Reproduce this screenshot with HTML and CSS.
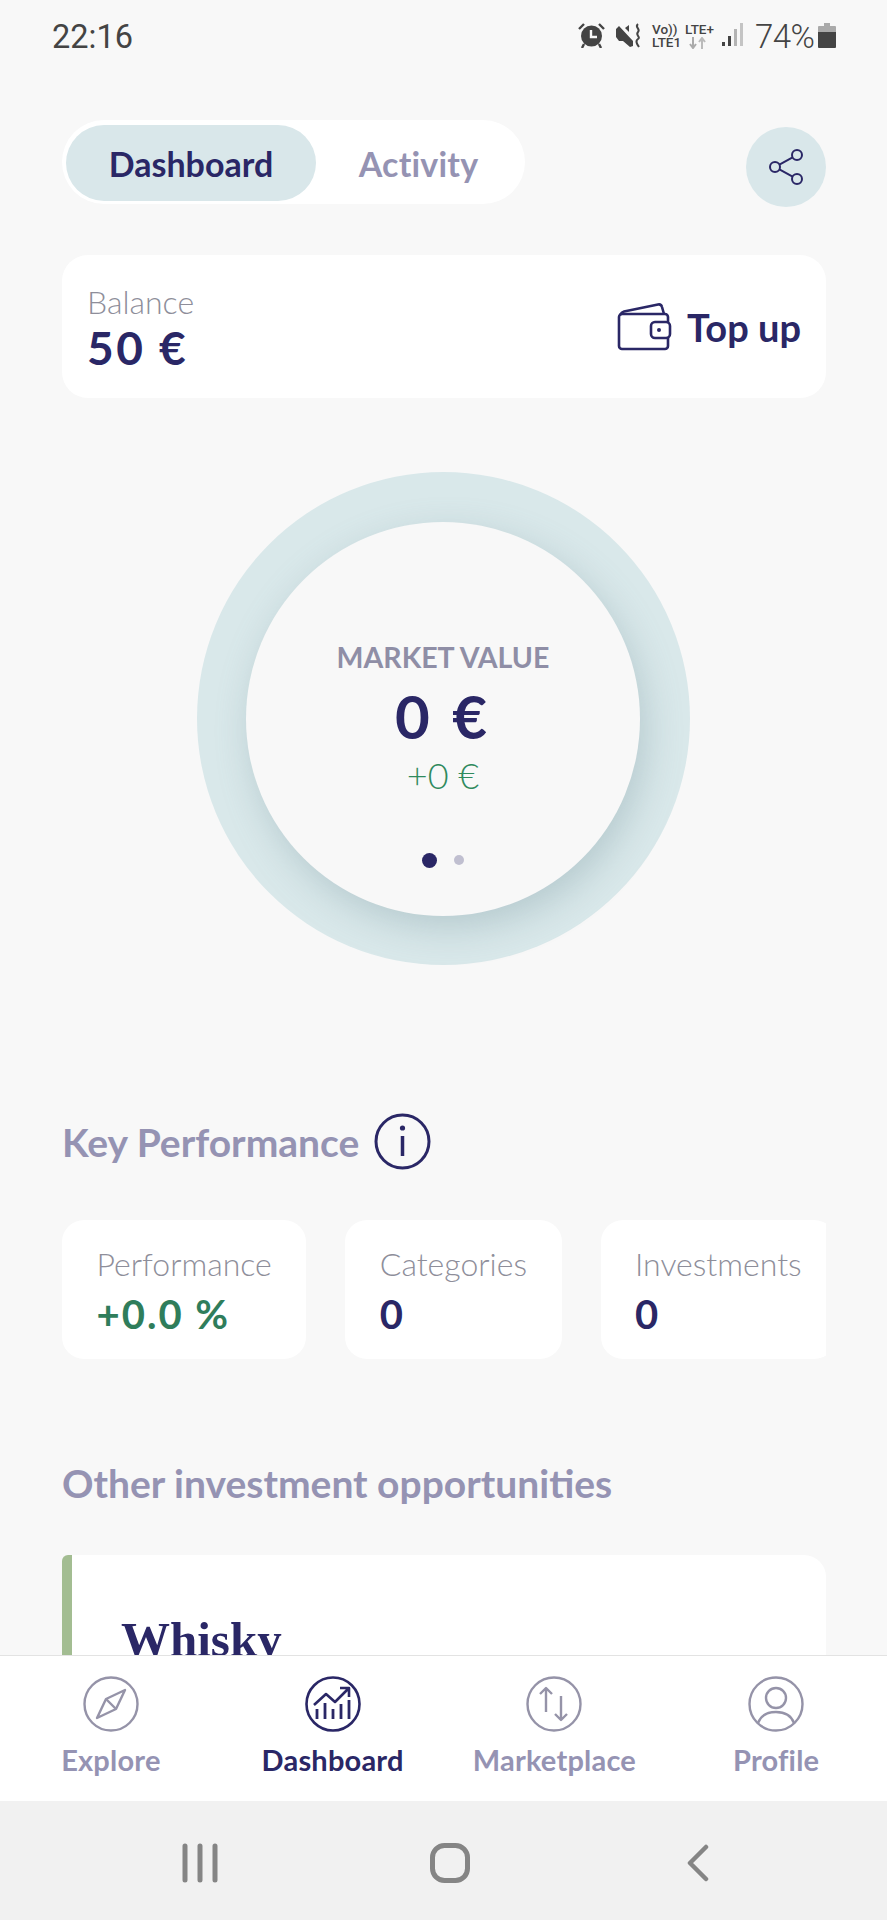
FILE: index.html
```html
<!DOCTYPE html>
<html lang="en">
<head>
    <meta charset="UTF-8">
    <meta name="viewport" content="width=device-width, initial-scale=1.0">
    <title>Dashboard</title>
    <link rel="stylesheet" href="styles.css">
</head>
<body>
    <div class="phone">
        <div class="status-bar">
            <span class="clock">22:16</span>
            <div class="status-icons">
                <svg class="st-alarm" viewBox="0 0 27 25"><path d="M1 6 6 1M26 6 21 1" fill="none" stroke="#444" stroke-width="2.4"/><circle cx="13.5" cy="13" r="10.5" fill="#444"/><path d="M13 7v7h6" fill="none" stroke="#f8f8f8" stroke-width="2.4"/><path d="M6 21 4 25M21 21l2 4" stroke="#444" stroke-width="2.4"/></svg>
                <svg class="st-mute" viewBox="0 0 26 25"><path d="M0 6 3 3l14 15v5l-3 1-7-6H3L0 14z" fill="#444"/><path d="M9 5l4-3v7z" fill="#444"/><path d="M22 1c-4 3 3 5 0 8s3 5 0 7-1 5 1 8" fill="none" stroke="#444" stroke-width="2"/></svg>
                <div class="st-net">
                    <span>Vo))</span><span>LTE+</span>
                    <span>LTE1</span>
                    <svg class="st-arrows" viewBox="0 0 17 12"><path d="M4 0v10M1 7l3 4 3-4" fill="none" stroke="#aaa" stroke-width="2"/><path d="M13 12V2M10 5l3-4 3 4" fill="none" stroke="#bbb" stroke-width="2"/></svg>
                </div>
                <svg class="st-signal" viewBox="0 0 21 24"><rect x="0" y="19" width="3" height="4" fill="#444"/><rect x="6" y="13" width="3" height="10" fill="#444"/><rect x="12" y="6" width="3" height="17" fill="#b4b4b4"/><rect x="18" y="0" width="3" height="23" fill="#c4c4c4"/></svg>
                <span class="st-pct">74%</span>
                <svg class="st-batt" viewBox="0 0 18 25"><path d="M6 0h6v3h5a1 1 0 0 1 1 1v5H0V4a1 1 0 0 1 1-1h5z" fill="#aaa"/><path d="M0 9h18v15a1 1 0 0 1-1 1H1a1 1 0 0 1-1-1z" fill="#444"/></svg>
            </div>
        </div>

        <div class="main">
            <div class="toolbar">
                <div class="tabs">
                    <div class="tab active">Dashboard</div>
                    <div class="tab">Activity</div>
                </div>
                <div class="share-btn">
                    <svg viewBox="0 0 38 38" width="38" height="38" fill="none" stroke="#2a2766" stroke-width="2"><circle cx="30" cy="7" r="5"/><circle cx="8" cy="19" r="5"/><circle cx="30" cy="31" r="5"/><path d="M25.600 9.400 12.400 16.600M12.400 21.400l13.200 7.200"/></svg>
                </div>
            </div>

            <div class="balance-card">
                <div>
                    <div class="balance-label">Balance</div>
                    <div class="balance-value">50 €</div>
                </div>
                <div class="top-up">
                    <svg viewBox="0 0 55 48" width="55" height="48" fill="none" stroke="#2a2766" stroke-width="2.6" stroke-linejoin="round"><path d="M5 46h43a3 3 0 0 0 3-3V35M51 19v-5a3 3 0 0 0-3-3H5a3 3 0 0 0-3 3v29a3 3 0 0 0 3 3"/><path d="M3 12c1-2 2-3 4-3.500L41 1.500c2-.4 3.500.5 4 2.500l2 7"/><rect x="34" y="19" width="19" height="16" rx="4"/><circle cx="42" cy="27" r="2" fill="#2a2766" stroke="none"/></svg>
                    <span>Top up</span>
                </div>
            </div>

            <div class="ring-wrap">
                <div class="ring">
                    <div class="ring-inner">
                        <div class="mv-label">MARKET VALUE</div>
                        <div class="mv-value">0 €</div>
                        <div class="mv-change">+0 €</div>
                        <div class="dots">
                            <span class="dot on"></span>
                            <span class="dot"></span>
                        </div>
                    </div>
                </div>
            </div>

            <div class="kpi-head">
                <h2 class="section-title">Key Performance</h2>
                <svg viewBox="0 0 57 57" width="57" height="57" fill="none" stroke="#2a2766"><circle cx="28.500" cy="28.500" r="26.500" stroke-width="3"/><path d="M28.500 23v20" stroke-width="3.500"/><circle cx="28.500" cy="15" r="2.600" fill="#2a2766" stroke="none"/></svg>
            </div>

            <div class="kpi-row">
                <div class="kpi">
                    <div class="kpi-label">Performance</div>
                    <div class="kpi-value green">+0.0 %</div>
                </div>
                <div class="kpi">
                    <div class="kpi-label">Categories</div>
                    <div class="kpi-value">0</div>
                </div>
                <div class="kpi">
                    <div class="kpi-label">Investments</div>
                    <div class="kpi-value">0</div>
                </div>
            </div>

            <h2 class="section-title other-title">Other investment opportunities</h2>

            <div class="invest-card">
                <div class="invest-name">Whisky</div>
            </div>
        </div>

        <div class="nav">
            <div class="nav-item">
                <svg viewBox="0 0 56 56" width="56" height="56" fill="none" stroke="#9593a8" stroke-width="2.400"><circle cx="28" cy="28" r="26.500"/><path d="M42 14 33 33 14 42 23 23z" stroke-linejoin="round"/><path d="M23 23 33 33" /></svg>
                <span>Explore</span>
            </div>
            <div class="nav-item active">
                <svg viewBox="0 0 56 56" width="56" height="56" fill="none" stroke="#2a2766" stroke-width="2.600"><circle cx="28" cy="28" r="26.500"/><path d="M9 29 21 18l9 8L43 13M35 12h9v9" stroke-linejoin="round"/><path d="M12 33v10M20 27v16M28 33v10M36 28v15M44 24v19" stroke-width="2.800"/></svg>
                <span>Dashboard</span>
            </div>
            <div class="nav-item">
                <svg viewBox="0 0 56 56" width="56" height="56" fill="none" stroke="#9593a8" stroke-width="2.400"><circle cx="28" cy="28" r="26.500"/><path d="M20 36V12M14 18l6-6 6 6M35 20v24M29 38l6 6 6-6" stroke-linejoin="round"/></svg>
                <span>Marketplace</span>
            </div>
            <div class="nav-item">
                <svg viewBox="0 0 56 56" width="56" height="56" fill="none" stroke="#9593a8" stroke-width="2.400"><circle cx="28" cy="28" r="26.500"/><circle cx="28" cy="22" r="10"/><path d="M10 47c3-8 10-11 18-11s15 3 18 11"/></svg>
                <span>Profile</span>
            </div>
        </div>

        <div class="sys-nav">
            <div class="sys-item">
                <svg viewBox="0 0 36 40" width="36" height="40" stroke="#858585" stroke-width="5" stroke-linecap="round"><path d="M3 3v34M18 3v34M33 3v34"/></svg>
            </div>
            <div class="sys-item">
                <svg viewBox="0 0 40 40" width="40" height="40" fill="none" stroke="#858585" stroke-width="5"><rect x="2.500" y="2.500" width="35" height="35" rx="12"/></svg>
            </div>
            <div class="sys-item back">
                <svg viewBox="0 0 22 38" width="22" height="38" fill="none" stroke="#858585" stroke-width="4.500" stroke-linecap="round" stroke-linejoin="round"><path d="M19 3 3 19l16 16"/></svg>
            </div>
        </div>
    </div>
</body>
</html>
```

FILE: styles.css
```css
* {
    box-sizing: border-box;
}
body {
    margin: 0;
    font-family: Lato, "Open Sans", sans-serif;
    background: #f8f8f8;
    color: #2a2766;
}
.phone {
    width: 887px;
    height: 1920px;
    display: flex;
    flex-direction: column;
    overflow: hidden;
}

/* status bar */
.status-bar {
    height: 74px;
    flex: none;
    display: flex;
    justify-content: space-between;
    padding: 18px 51px 0 52px;
    color: #444;
    font-family: Roboto, sans-serif;
}
.clock {
    font-size: 32.500px;
    line-height: 38px;
}
.status-icons {
    display: flex;
    align-items: flex-start;
    height: 38px;
    padding-top: 5px;
}
.st-alarm {
    width: 27px;
    height: 25px;
    margin-right: 11px;
}
.st-mute {
    width: 26px;
    height: 25px;
    margin-right: 10px;
}
.st-net {
    display: grid;
    grid-template-columns: 33px 30px;
    font-size: 13.500px;
    line-height: 13px;
    font-weight: 500;
    width: 70px;
}
.st-arrows {
    width: 17px;
    height: 12px;
    margin: 1px 0 0 4px;
}
.st-signal {
    width: 21px;
    height: 24px;
    margin-right: 12px;
}
.st-pct {
    font-size: 33px;
    line-height: 27px;
    font-weight: 300;
    width: 63px;
    letter-spacing: -0.5px;
}
.st-batt {
    width: 18px;
    height: 25px;
}

/* main scroll area */
.main {
    flex: 1;
    min-height: 0;
    overflow: hidden;
    padding: 46px 61px 0 62px;
}
.toolbar {
    display: flex;
    justify-content: space-between;
    align-items: flex-start;
    height: 84px;
}
.tabs {
    width: 463px;
    height: 84px;
    background: white;
    border-radius: 42px;
    padding: 5px 4px;
    display: flex;
}
.tab {
    width: 250px;
    height: 76px;
    border-radius: 38px;
    text-align: center;
    line-height: 78px;
    font-size: 34px;
    font-weight: 700;
    color: #9593b3;
}
.tab.active {
    background: #d9e7ea;
    color: #2a2766;
}
.tab + .tab {
    width: 205px;
    letter-spacing: 0.2px;
}
.share-btn {
    width: 80px;
    height: 80px;
    margin-top: 7px;
    border-radius: 50%;
    background: #d9e7ea;
    display: flex;
    align-items: center;
    justify-content: center;
}
.balance-card {
    margin-top: 51px;
    height: 143px;
    background: white;
    border-radius: 26px;
    padding: 0 25px;
    display: flex;
    justify-content: space-between;
    align-items: center;
}
.balance-label {
    font-size: 32px;
    line-height: 36px;
    font-weight: 300;
    color: #8e8e9a;
}
.balance-value {
    font-size: 46px;
    line-height: 52px;
    font-weight: 700;
    letter-spacing: 2.500px;
    margin-bottom: -4px;
    padding-top: 2px;
}
.top-up {
    display: flex;
    align-items: center;
    gap: 15px;
    font-size: 38px;
    font-weight: 700;
}

/* donut */
.ring-wrap {
    margin-top: 74px;
    padding-right: 2px;
    display: flex;
    justify-content: center;
}
.ring {
    width: 493px;
    height: 493px;
    border-radius: 50%;
    background: #d9e8ea;
    display: flex;
    align-items: center;
    justify-content: center;
}
.ring-inner {
    width: 394px;
    height: 394px;
    border-radius: 50%;
    background: #f8f8f8;
    box-shadow: 6px 12px 36px rgba(110, 140, 148, 0.32);
    display: flex;
    flex-direction: column;
    align-items: center;
    padding-top: 117px;
}
.mv-label {
    font-size: 28.500px;
    line-height: 36px;
    font-weight: 700;
    color: #8f8ea6;
}
.mv-value {
    font-size: 60px;
    line-height: 60px;
    font-weight: 700;
    letter-spacing: 4px;
    margin-top: 11px;
}
.mv-change {
    font-size: 36px;
    line-height: 44px;
    font-weight: 300;
    color: #2f8a5d;
    margin-top: 7px;
}
.dots {
    display: flex;
    align-items: center;
    gap: 17px;
    margin-top: 56px;
}
.dot {
    width: 10px;
    height: 10px;
    border-radius: 50%;
    background: #c0bfd0;
}
.dot.on {
    width: 15px;
    height: 15px;
    background: #2a2766;
}

/* key performance */
.kpi-head {
    margin-top: 148px;
    display: flex;
    align-items: center;
    gap: 15px;
    height: 57px;
}
.section-title {
    margin: 0;
    font-size: 39px;
    line-height: 46px;
    font-weight: 700;
    color: #9593b3;
}
.kpi-row {
    margin-top: 50px;
    display: flex;
    gap: 39px;
    overflow: hidden;
}
.kpi {
    flex: none;
    height: 139px;
    background: white;
    border-radius: 22px;
    padding: 24px 34.500px 0;
}
.kpi-label {
    font-size: 32px;
    line-height: 40px;
    font-weight: 300;
    color: #8e8e9a;
}
.kpi-value {
    font-size: 40px;
    line-height: 50px;
    margin-top: 5px;
    font-weight: 700;
    letter-spacing: 2px;
}
.kpi-value.green {
    color: #2f7d5b;
}
.other-title {
    margin-top: 101px;
}
.invest-card {
    margin-top: 49px;
    height: 300px;
    background: white;
    border-left: 10px solid #a3bd92;
    border-radius: 6px 22px 22px 6px;
    padding: 57px 0 0 49px;
}
.invest-name {
    font-family: "Liberation Serif", serif;
    font-size: 49px;
    line-height: 56px;
    font-weight: 700;
}

/* bottom nav */
.nav {
    flex: none;
    height: 146px;
    background: white;
    border-top: 1px solid #e3e3e3;
    display: grid;
    grid-template-columns: repeat(4, 1fr);
}
.nav-item {
    display: flex;
    flex-direction: column;
    align-items: center;
    padding-top: 20px;
    font-size: 29px;
    font-weight: 700;
    letter-spacing: 0.2px;
    color: #9593b3;
}
.nav-item span {
    margin-top: 9px;
    line-height: 38px;
}
.nav-item.active {
    color: #2a2766;
}
.sys-nav {
    flex: none;
    height: 119px;
    background: #f1f1f1;
    padding: 4px 0 0 75px;
    display: grid;
    grid-template-columns: repeat(3, 250px);
}
.sys-item {
    display: flex;
    align-items: center;
    justify-content: center;
}
.sys-item.back {
    padding-right: 5px;
}
```
